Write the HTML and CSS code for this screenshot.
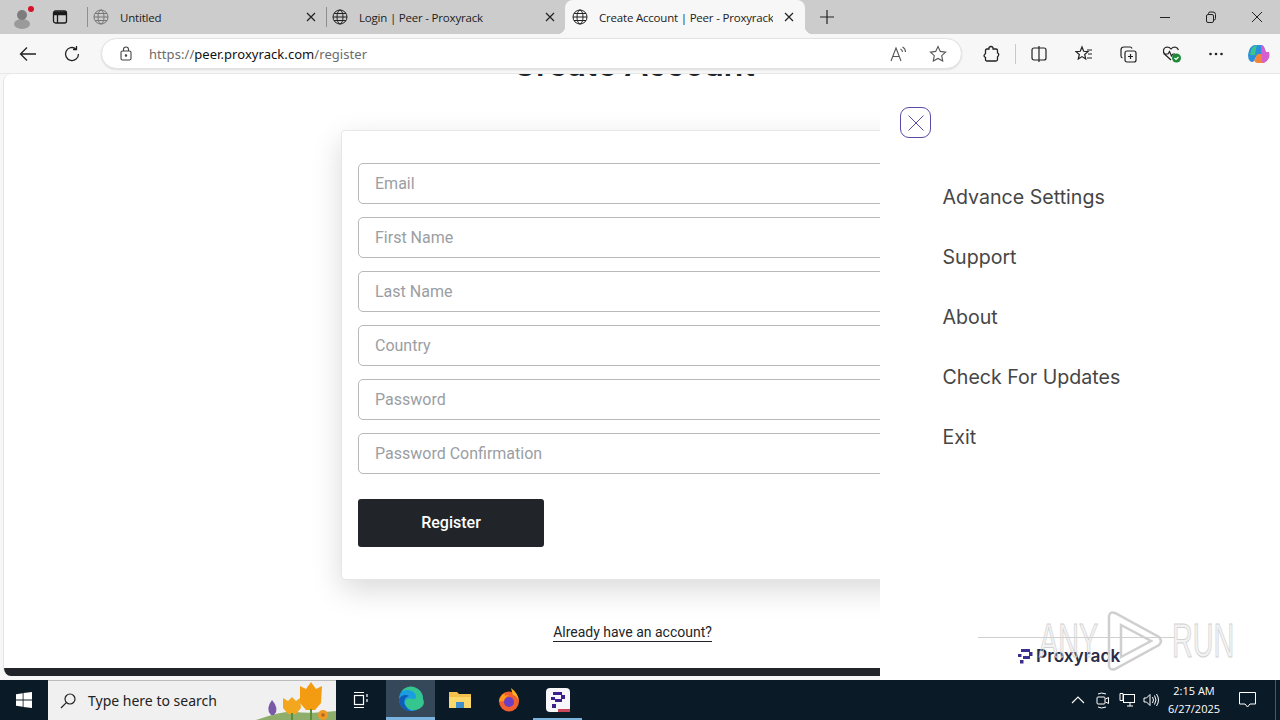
FILE: index.html
```html
<!DOCTYPE html>
<html lang="en">
<head>
<meta charset="utf-8">
<title>Create Account | Peer - Proxyrack</title>
<link rel="stylesheet" href="styles.css">
</head>
<body>
<div class="tabstrip">
  <div class="profile">
    <svg width="24" height="26" viewBox="0 0 24 26"><ellipse cx="12" cy="20" rx="8" ry="5" fill="#9a9a9a"/><circle cx="12" cy="11" r="5" fill="#7d7d7d"/><circle cx="21" cy="5" r="3" fill="#d8102a"/></svg>
  </div>
  <div class="tabicon">
    <svg width="16" height="16" viewBox="0 0 16 16" fill="none" stroke="#1a1a1a" stroke-width="1.3"><rect x="1.5" y="2" width="13" height="12" rx="2"/><path d="M1.5 5.5h13M5.5 5.5V14" /><rect x="2" y="2.5" width="12" height="3" fill="#1a1a1a" stroke="none"/></svg>
  </div>
  <div class="sep"></div>
  <div class="tab faded">
    <svg class="globe" viewBox="0 0 16 16"><circle cx="8" cy="8" r="7"/><ellipse cx="8" cy="8" rx="3" ry="7"/><path d="M1 8h14M2 4.5h12M2 11.5h12"/></svg>
    <span class="tabtitle">Untitled</span>
    <svg class="x" viewBox="0 0 10 10"><path d="M1 1l8 8M9 1l-8 8"/></svg>
  </div>
  <div class="sep sep-flush"></div>
  <div class="tab second">
    <svg class="globe" viewBox="0 0 16 16"><circle cx="8" cy="8" r="7"/><ellipse cx="8" cy="8" rx="3" ry="7"/><path d="M1 8h14M2 4.5h12M2 11.5h12"/></svg>
    <span class="tabtitle">Login | Peer - Proxyrack</span>
    <svg class="x" viewBox="0 0 10 10"><path d="M1 1l8 8M9 1l-8 8"/></svg>
  </div>
  <div class="tab active">
    <svg class="globe" viewBox="0 0 16 16"><circle cx="8" cy="8" r="7"/><ellipse cx="8" cy="8" rx="3" ry="7"/><path d="M1 8h14M2 4.5h12M2 11.5h12"/></svg>
    <span class="tabtitle">Create Account | Peer - Proxyrack</span>
    <svg class="x" viewBox="0 0 10 10"><path d="M1 1l8 8M9 1l-8 8"/></svg>
  </div>
  <div class="newtab"><svg width="14" height="14" viewBox="0 0 14 14" stroke="#222" stroke-width="1.2"><path d="M7 0v14M0 7h14"/></svg></div>
  <div class="winctl">
    <svg width="46" height="34" viewBox="0 0 46 34" stroke="#222" fill="none"><path d="M18 17.5h10"/></svg>
    <svg width="46" height="34" viewBox="0 0 46 34" stroke="#222" fill="none"><rect x="18.5" y="14.5" width="7" height="8" rx="1.5"/><path d="M20.5 14v-.5q0-1.500 1.500-1.500h3q2.500 0 2.500 2.500v4q0 1.500-1.500 1.500H26"/></svg>
    <svg width="46" height="34" viewBox="0 0 46 34" stroke="#222" fill="none"><path d="M18 12l10 10M28 12l-10 10"/></svg>
  </div>
</div>
<div class="toolbar">
  <button class="tool"><svg width="18" height="16" viewBox="0 0 18 16" fill="none" stroke="#222" stroke-width="1.3"><path d="M17 8H1.500M8 1.500L1.500 8 8 14.500"/></svg></button>
  <button class="tool"><svg width="18" height="18" viewBox="0 0 18 18" fill="none" stroke="#222" stroke-width="1.3"><path d="M15.500 9A6.500 6.500 0 1 1 13 3.900M13.500 1v3.500H10"/></svg></button>
  <div class="omnibox">
    <svg class="lock" width="12" height="15" viewBox="0 0 12 15" fill="none" stroke="#444" stroke-width="1.100"><rect x="1" y="5" width="10" height="9" rx="1.500"/><path d="M3.500 5V3.500a2.500 2.500 0 0 1 5 0V5"/><circle cx="6" cy="9.500" r=".7" fill="#444"/></svg>
    <span class="url"><span class="dim">https://</span>peer.proxyrack.com<span class="dim">/register</span></span>
    <svg class="omni-ic ic-read" width="18" height="16" viewBox="0 0 18 16" fill="none" stroke="#555" stroke-width="1.100"><path d="M1 15L6 2l5 13M3 10.500h6"/><path d="M10.500 3q2 1 2 3M12.500 1q3 1.500 3 5"/></svg>
    <svg class="omni-ic" width="18" height="17" viewBox="0 0 18 17" fill="none" stroke="#555" stroke-width="1.100"><path d="M9 1.500l2.300 4.900 5.300.7-3.900 3.600 1 5.300L9 13.400 4.300 16l1-5.300L1.400 7.100l5.300-.7z"/></svg>
  </div>
  <div class="tools">
    <button class="tool"><svg width="18" height="18" viewBox="0 0 18 18" fill="none" stroke="#222" stroke-width="1.300"><path d="M7 2.500q2-2 4 0v1.500h3q1.500 0 1.500 1.500v2.500q2.500 1 0 4v2.500q0 1.500-1.500 1.500H5q-1.500 0-1.500-1.500v-2q-3-1.500 0-4V5.500Q3.500 4 5 4h2z"/></svg></button>
    <div class="toolsep"></div>
    <button class="tool split"><svg width="18" height="18" viewBox="0 0 18 18" fill="none" stroke="#222" stroke-width="1.200"><rect x="2" y="3" width="14" height="12" rx="2"/><path d="M9 1v16" stroke="#222"/></svg></button>
    <button class="tool"><svg width="18" height="18" viewBox="0 0 18 18" fill="none" stroke="#222" stroke-width="1.200"><path d="M7 2l1.700 4.300 4.300.3-3.300 2.900 1 4.500L7 11.600 3.300 14l1-4.500L1 6.600l4.300-.3zM12 5h5M13 9h4M12 13h5"/></svg></button>
    <button class="tool"><svg width="18" height="18" viewBox="0 0 18 18" fill="none" stroke="#222" stroke-width="1.200"><rect x="6" y="6" width="11" height="11" rx="2"/><path d="M11.500 9v5M9 11.500h5M13 3.500Q12.500 2 11 2H5Q2 2 2 5v6q0 1.500 1.500 2"/></svg></button>
    <button class="tool"><svg width="20" height="18" viewBox="0 0 20 18" fill="none" stroke="#222" stroke-width="1.200"><path d="M9 15L3 9.500Q1 7.500 1.500 5T5 2q2.500 0 4 2 1.500-2 4-2 2.500.5 3.500 3M1.500 9H6l1.500-2.500L9.500 11l1.500-2h2"/><circle cx="14.500" cy="13" r="4.500" fill="#1d8a3a" stroke="none"/><path d="M12.500 13l1.500 1.500 2.500-2.500" stroke="#fff"/></svg></button>
    <button class="tool"><svg width="16" height="4" viewBox="0 0 16 4" fill="#222"><circle cx="2.500" cy="2" r="1.300"/><circle cx="8" cy="2" r="1.300"/><circle cx="13.500" cy="2" r="1.300"/></svg></button>
    <button class="tool copilot"><svg width="24" height="22" viewBox="0 0 24 22"><path d="M8 2h6q2 0 3 2l3 8H12q-2 0-3 2l-2 4q-2 2-4 0Q1 16 1 12q1-6 3-8t4-2z" fill="#2a8fdc"/><path d="M14 2q2 0 3 2l2 5h3q1 3 0 6-2 4-5 5H9q3-1 4-4l1-3V2z" fill="#d65fcf"/><path d="M7 18q2 2 4 2h6q-3 0-2-6l-1-3H11q-2 1-2 3z" fill="#f3843e"/><path d="M3 12q1-6 3-8t5-2q-2 1-2 4l-1 6z" fill="#3cc48c"/></svg></button>
  </div>
</div>
<main class="viewport">
  <div class="page">
    <h1 class="title">Create Account</h1>
    <form class="card">
      <input class="field" placeholder="Email">
      <input class="field" placeholder="First Name">
      <input class="field" placeholder="Last Name">
      <input class="field" placeholder="Country">
      <input class="field" placeholder="Password">
      <input class="field" placeholder="Password Confirmation">
      <button type="button" class="submit">Register</button>
    </form>
    <a class="login" href="#">Already have an account?</a>
    <div class="darkbar"></div>
  </div>
  <aside class="drawer">
    <button class="close"><svg width="18" height="18" viewBox="0 0 18 18" fill="none" stroke="#5b4aa8" stroke-width="1"><path d="M1.500 1.500l15 15M16.500 1.500l-15 15"/></svg></button>
    <nav class="menu">
      <a>Advance Settings</a>
      <a>Support</a>
      <a>About</a>
      <a>Check For Updates</a>
      <a>Exit</a>
    </nav>
    <div class="drawer-foot">
      <div class="rule"></div>
      <div class="brand">
        <svg width="15" height="15" viewBox="0 0 15 15" fill="#3b2f8f"><rect x="3" y="0" width="3" height="3"/><rect x="6" y="0" width="6" height="3"/><rect x="11" y="3" width="3.500" height="4"/><rect x="0" y="5" width="3.500" height="3" /><rect x="5" y="7" width="7" height="3"/><rect x="2" y="11" width="3.500" height="3.500"/></svg>
        <span>Proxyrack</span>
      </div>
    </div>
  </aside>
  <div class="watermark">
    <span class="wm-text">ANY</span>
    <svg class="wm-play" width="56" height="62" viewBox="0 0 56 62" fill="none" stroke="#cfcfcf" stroke-width="2.500"><path d="M8 3q-5-2-6 3v50q1 5 6 3l44-24q4-4 0-8z"/><path d="M14 15v32l30-16z"/></svg>
    <span class="wm-text">RUN</span>
  </div>
</main>
<footer class="taskbar">
  <div class="start"><svg width="16" height="16" viewBox="0 0 16 16" fill="#fff"><path d="M0 2.200l6.700-1v6.300H0zM7.500 1l8.500-1v7.500H7.500zM0 8.500h6.700v6.300l-6.700-1zM7.500 8.500H16V16l-8.500-1z"/></svg></div>
  <div class="search">
    <svg width="16" height="16" viewBox="0 0 16 16" fill="none" stroke="#222" stroke-width="1.200"><circle cx="10" cy="6" r="5"/><path d="M6.300 9.700L1 15"/></svg>
    <span>Type here to search</span>
    <svg class="flowers" width="80" height="40" viewBox="0 0 80 40"><path d="M0 40q28-10 40-8t40-1v9z" fill="#8fae6b"/><path d="M16 20q-7 9-1 15h3q6-6-2-15z" fill="#7a5aa8"/><path d="M27 18l5 3 4-4 4 4 4-3 1 10-5 6h-8l-5-6z" fill="#f2a71f"/><path d="M44 6l6 3 5-7 5 7 6-3-1 17-6 7h-9l-6-7z" fill="#f39c12"/><circle cx="67" cy="35" r="5" fill="#ed9a28"/><circle cx="67" cy="35" r="1.800" fill="#b5651d"/><path d="M36 33v7M55 29v11" stroke="#5c8f3a" stroke-width="2"/></svg>
  </div>
  <div class="apps">
    <div class="app taskview"><svg width="16" height="18" viewBox="0 0 16 18" fill="none" stroke="#fff" stroke-width="1.200"><rect x="2.500" y="4.500" width="9" height="9"/><path d="M2 1.500h10M2 16.500h10M15 3v3M15 8v3" /></svg></div>
    <div class="app on"><svg width="26" height="26" viewBox="0 0 26 26"><circle cx="13" cy="13" r="12" fill="#1b9de2"/><path d="M25 13A12 12 0 0 0 3 6c5-4 14-2 15 4q.5 3-3 3c-3-1-8-1-8 4 0 5 7 9 14 6q7-4 4-10z" fill="#35c58f"/><path d="M11 25C5 24 1 19 1 13c2-4 7-5 10-3-4 1-6 5-4 9q2 4 6 6z" fill="#0f5bb5"/></svg></div>
    <div class="app"><svg width="24" height="20" viewBox="0 0 24 20"><path d="M1 2h8l2 2h12v14H1z" fill="#f3c14b"/><path d="M1 7h22v11H1z" fill="#fbd869"/><path d="M8 12h8v6H8z" fill="#3f8fcf"/></svg></div>
    <div class="app"><svg width="24" height="24" viewBox="0 0 24 24"><circle cx="12" cy="13.500" r="10" fill="#f25f2f"/><path d="M14 0q7 5 8 13-2-5-6-6-1-3-2-7z" fill="#ffb01f"/><path d="M2 13.500Q3 7 8 5q-1 2 0 3 1-1 4-1-4 2-5 6z" fill="#ff9a1f"/><circle cx="12" cy="14" r="5" fill="#6a3fc4"/></svg></div>
    <div class="app lined"><div class="peer-tile"><svg width="14" height="16" viewBox="0 0 14 16" fill="#3b1f8f"><rect x="2" y="0" width="9" height="3"/><rect x="10" y="3" width="4" height="4"/><rect x="0" y="5" width="4" height="3"/><rect x="4" y="7" width="7" height="3"/><rect x="1" y="12" width="4" height="4"/></svg><i class="tile-badge"></i></div></div>
  </div>
  <div class="tray">
    <svg class="tray-chevron" width="14" height="8" viewBox="0 0 14 8" fill="none" stroke="#fff" stroke-width="1.100"><path d="M1 7l6-6 6 6"/></svg>
    <svg class="tray-meet" width="14" height="18" viewBox="0 0 14 18" fill="none" stroke="#fff"><rect x="1" y="6" width="8" height="7" rx="1"/><path d="M9.500 8l3-1.500v6L9.500 11M2 3q3-2 8 0M2 16q3 2 8 0"/></svg>
    <svg width="16" height="14" viewBox="0 0 16 14" fill="none" stroke="#fff"><rect x="4.500" y="1.500" width="11" height="8"/><path d="M1 .5h3v7H1zM8 13h6M11 9.500V13"/></svg>
    <svg width="16" height="14" viewBox="0 0 16 14" fill="none" stroke="#fff"><path d="M1 5h2.500L7 1.500v11L3.500 9H1zM9.500 4q2 3 0 6M11.500 2.500q3 4.500 0 9M13.500 1q4 6 0 12"/></svg>
    <div class="clock"><span>2:15 AM</span><span>6/27/2025</span></div>
    <svg class="notif" width="17" height="16" viewBox="0 0 17 16" fill="none" stroke="#fff"><path d="M.5.500h16v11.500h-5.500L8.500 15 6 12H.5z"/></svg>
    <div class="showdesk"></div>
  </div>
</footer>
</body>
</html>
```

FILE: styles.css
```css
* { box-sizing: border-box; }
html, body { margin: 0; height: 720px; overflow: hidden; }
body { width: 1280px; display: flex; flex-direction: column; font-family: "Open Sans", "Noto Sans", sans-serif; background: #f7f7f7; }

.tabstrip { height: 34px; background: #cccccc; display: flex; align-items: center; flex: none; }
.profile { width: 44px; height: 34px; display: flex; align-items: center; justify-content: center; }
.tabicon { width: 32px; display: flex; justify-content: center; }
.sep { width: 1px; height: 20px; background: #8f8f8f; margin-left: 11px; flex: none; }
.sep-flush { margin-left: 0; }
.tab { width: 238px; height: 34px; display: flex; align-items: center; padding: 0 10px 0 5px; gap: 11px; font: 11.5px "Open Sans", sans-serif; letter-spacing: -.2px; color: #222; flex: none; position: relative; }
.tab.faded .globe { opacity: .5; }
.tabtitle { flex: 1; white-space: nowrap; overflow: hidden; }
.globe { width: 16px; height: 16px; fill: none; stroke: #222; stroke-width: 1; flex: none; }
.x { width: 10px; height: 10px; fill: none; stroke: #222; stroke-width: 1.200; flex: none; }
.tab.active { width: 240px; background: #f7f7f7; border-radius: 8px 8px 0 0; padding: 0 11px 0 7px; }
.tab.active::before, .tab.active::after { content: ""; position: absolute; bottom: 0; width: 8px; height: 8px; }
.tab.active::before { left: -8px; background: radial-gradient(circle at 0 0, transparent 8px, #f7f7f7 8.500px); }
.tab.active::after { right: -8px; background: radial-gradient(circle at 100% 0, transparent 8px, #f7f7f7 8.500px); }
.newtab { width: 44px; display: flex; justify-content: center; }
.winctl { margin-left: auto; display: flex; }

.toolbar { height: 40px; background: #f7f7f7; border-bottom: 1px solid #e8e8e8; display: flex; align-items: center; flex: none; padding-left: 6px; }
.tool { width: 44px; height: 32px; border: 0; background: none; padding: 0; display: flex; align-items: center; justify-content: center; flex: none; }
.omnibox { width: 861px; height: 31px; margin-left: 7px; background: #fff; border: 1px solid #e2e2e2; border-radius: 16px; display: flex; align-items: center; padding-left: 18px; flex: none; box-shadow: 0 1px 2px rgba(0,0,0,.1); }
.url { font: 13px "Noto Sans", sans-serif; letter-spacing: .06px; color: #111; margin-left: 17px; flex: 1; white-space: nowrap; }
.dim { color: #6b6b6b; }
.omni-ic { margin-right: 14px; }
.omni-ic.ic-read { margin-right: 21px; }
.tools { display: flex; align-items: center; margin-left: 7px; }
.toolsep { width: 1px; height: 20px; background: #c9c9c9; flex: none; margin-left: 2px; }
.tools .split { width: 46px; }
.tools .copilot { width: 41px; }

.viewport { flex: 1; position: relative; overflow: hidden; background: #f7f7f7; }
.page { height: 602px; margin-left: 3px; background: #fff; border-left: 1px solid #e4e4e4; border-radius: 8px 0 0 8px; position: relative; overflow: hidden; display: flex; flex-direction: column; align-items: center; font-family: Roboto, sans-serif; padding-right: 16px; }
.title { margin: -31px 0 0; font: 500 35px/44px Roboto, sans-serif; color: #212529; white-space: nowrap; }
.card { width: 586px; margin-top: 43px; flex: none; background: #fff; border: 1px solid #e6e6e6; border-radius: 4px; padding: 32px 16px; box-shadow: 0 10px 30px rgba(0,0,0,.15); display: flex; flex-direction: column; gap: 13px; align-items: flex-start; }
.field { width: 100%; height: 41px; border: 1px solid #b9b9b9; border-radius: 5px; padding: 0 16px; font: 16px Roboto, sans-serif; background: #fff; }
.field::placeholder { color: #9a9ea3; opacity: 1; }
.submit { width: 186px; height: 48px; margin-top: 12px; padding: 0 0 2px; background: #212529; color: #fff; font: 500 16px Roboto, sans-serif; border: 0; border-radius: 3px; }
.login { margin: 43px 3px 0 0; font: 14px/18px Roboto, sans-serif; color: #212529; border-bottom: 1px solid #212529; text-decoration: none; }
.darkbar { position: absolute; left: 0; right: 0; bottom: 0; height: 8px; background: #212529; }

.drawer { position: absolute; top: 0; right: 0; bottom: 0; width: 400px; background: #fff; display: flex; flex-direction: column; padding: 33px 0 0 20px; }
.close { width: 31px; height: 31px; border: 1px solid #5b4aa8; border-radius: 9px; background: #fff; padding: 0; display: flex; align-items: center; justify-content: center; flex: none; }
.menu { display: flex; flex-direction: column; margin: 44px 0 0 42.500px; gap: 30px; font: 400 19.600px/30px Inter, sans-serif; color: #464646; }
.drawer-foot { margin-top: auto; padding-left: 78px; padding-bottom: 14px; }
.rule { width: 197px; height: 1px; background: #cfcfcf; }
.brand { display: flex; align-items: center; gap: 3px; margin: 8px 0 0 40px; font: 600 17.300px/20px Inter, sans-serif; color: #2b2b45; }

.watermark { position: absolute; right: 48px; top: 536px; height: 62px; display: flex; align-items: center; pointer-events: none; }
.wm-text { width: 60px; display: block; font: 400 48px/62px "Liberation Sans", sans-serif; color: rgba(215,215,215,.3); -webkit-text-stroke: 1px #d2d2d2; transform: scaleX(.6); transform-origin: left center; white-space: nowrap; }
.wm-play { margin: 0 9px 0 8px; }

.taskbar { height: 40px; background: #0b1a27; display: flex; align-items: center; flex: none; color: #fff; }
.start { width: 48px; display: flex; justify-content: center; }
.search { width: 288px; height: 40px; background: #f0f0f0; border-top: 1px solid #bbb; display: flex; align-items: center; padding-left: 12px; gap: 12px; font: 14px "Noto Sans", sans-serif; color: #222; position: relative; overflow: hidden; }
.flowers { position: absolute; right: 0; bottom: 0; }
.apps { display: flex; margin-left: 1px; }
.app { width: 49px; height: 40px; display: flex; align-items: center; justify-content: center; }
.app.taskview { padding-right: 4px; }
.app.on { background: #35485a; border-bottom: 3px solid #7ab4de; }
.app.lined { box-shadow: inset 0 -2px 0 #7ab4de; }
.peer-tile { width: 24px; height: 24px; background: #f6f6fb; border-radius: 4px; display: flex; align-items: center; justify-content: center; position: relative; }
.tile-badge { position: absolute; right: 0; bottom: 0; width: 12px; height: 3px; background: #c9475b; }
.tray { margin-left: auto; display: flex; align-items: center; gap: 8px; height: 40px; }
.tray-chevron { margin-right: 3px; }
.tray-meet { margin-right: 1px; }
.clock { display: flex; flex-direction: column; align-items: center; font: 11px/18px "Open Sans", sans-serif; color: #fff; margin-left: -2px; width: 58px; }
.notif { margin-left: 8px; }
.showdesk { width: 1px; height: 40px; background: #4a5662; margin-left: 11px; margin-right: 4px; }
```
